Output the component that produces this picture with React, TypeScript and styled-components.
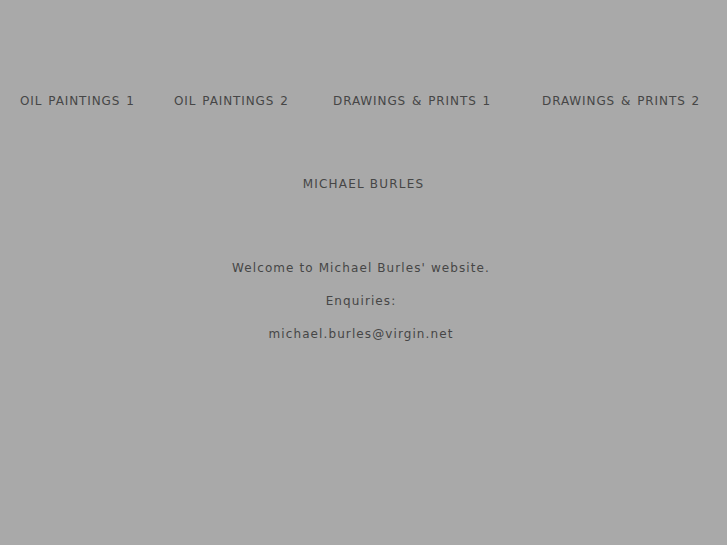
import React from "react";
import styled, { createGlobalStyle } from "styled-components";

const Global = createGlobalStyle`
  html, body { margin: 0; padding: 0; background: #a9a9a9; }
  body { font-family: "DejaVu Sans", sans-serif; color: #464646; }
`;

const Page = styled.div`
  width: 727px;
  min-height: 545px;
  background: #a9a9a9;
`;

const Nav = styled.nav`
  display: grid;
  grid-template-columns: 154px 159px 209px auto;
  padding: 93px 0 0 20px;
`;

const NavItem = styled.a`
  font-size: 12px;
  letter-spacing: 0.9px;
  word-spacing: 1.2px;
  text-transform: uppercase;
  color: #464646;
  text-decoration: none;
  line-height: 16px;
  white-space: nowrap;
`;

const Title = styled.h1`
  margin: 67px 0 0;
  font-size: 12px;
  font-weight: normal;
  letter-spacing: 1.2px;
  text-transform: uppercase;
  text-align: center;
  line-height: 16px;
`;

const Body = styled.div`
  margin-top: 68px;
  padding-right: 5px;
  text-align: center;
`;

const Para = styled.p`
  margin: 0 0 17px;
  font-size: 12px;
  letter-spacing: 1.1px;
  line-height: 16px;
`;

export default function App() {
  return (
    <Page>
      <Global />
      <Nav>
        <NavItem href="#">Oil Paintings 1</NavItem>
        <NavItem href="#">Oil Paintings 2</NavItem>
        <NavItem href="#">Drawings &amp; Prints 1</NavItem>
        <NavItem href="#">Drawings &amp; Prints 2</NavItem>
      </Nav>
      <Title>Michael Burles</Title>
      <Body>
        <Para>Welcome to Michael Burles' website.</Para>
        <Para>Enquiries:</Para>
        <Para>michael.burles@virgin.net</Para>
      </Body>
    </Page>
  );
}
